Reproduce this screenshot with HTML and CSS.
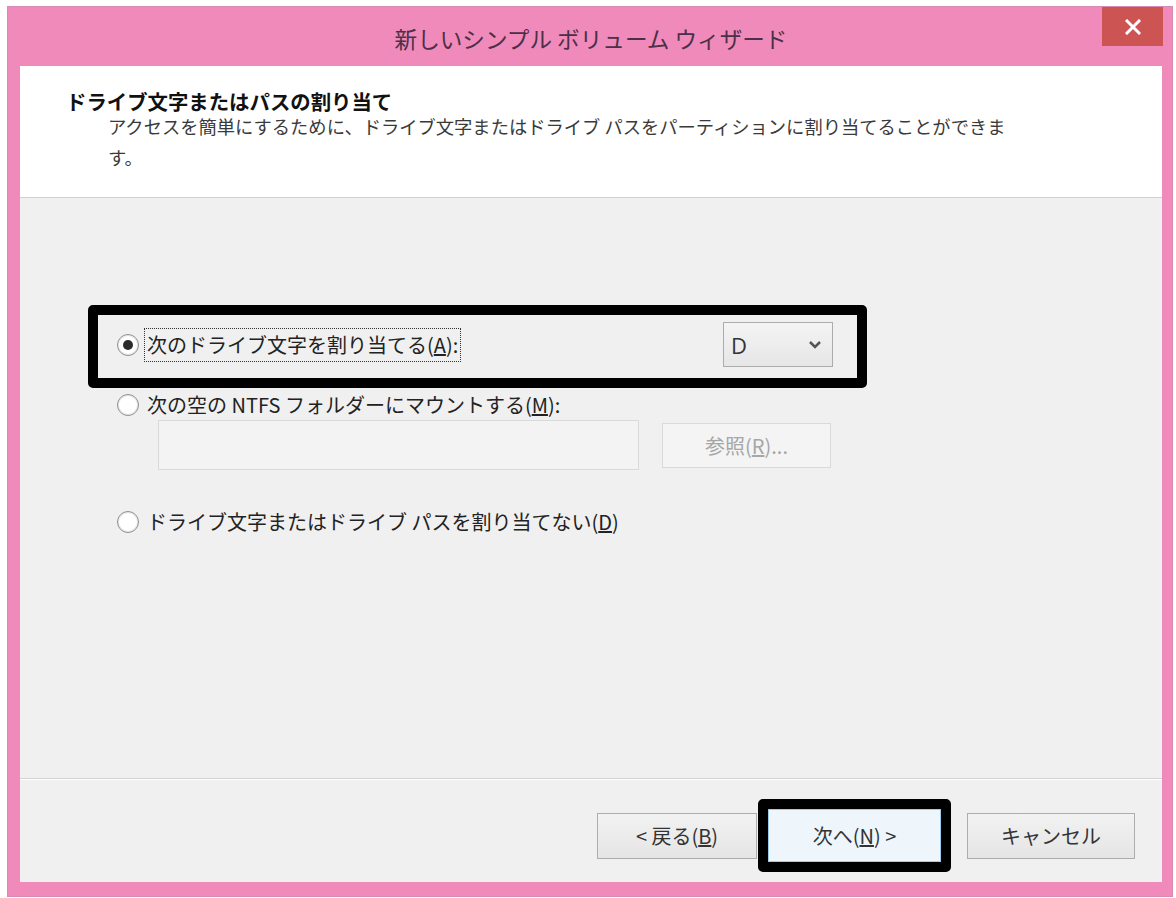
FILE: index.html
```html
<!DOCTYPE html>
<html lang="ja">
<head>
  <meta charset="UTF-8">
  <title>新しいシンプル ボリューム ウィザード</title>
  <link rel="stylesheet" href="styles.css">
</head>
<body>
  <div class="window">
    <div class="titlebar">
      <div></div>
      <div class="title">新しいシンプル ボリューム ウィザード</div>
      <div class="close">
        <svg width="16" height="16" viewBox="0 0 16 16">
          <path d="M2 2 L14 14 M14 2 L2 14" stroke="#fff" stroke-width="3" stroke-linecap="square"/>
        </svg>
      </div>
    </div>

    <div class="content">
      <div class="header">
        <div class="heading">ドライブ文字またはパスの割り当て</div>
        <div class="desc">アクセスを簡単にするために、ドライブ文字またはドライブ パスをパーティションに割り当てることができます。</div>
      </div>

      <div class="body">
        <div class="option first marked">
          <span class="radio checked"></span>
          <span class="label focus">次のドライブ文字を割り当てる(<u>A</u>):</span>
          <div class="combo">
            <span>D</span>
            <svg width="14" height="10" viewBox="0 0 14 10">
              <path d="M2 2 L7 7 L12 2" fill="none" stroke="#555" stroke-width="2.5"/>
            </svg>
          </div>
        </div>

        <div class="option second">
          <span class="radio"></span>
          <span class="label">次の空の NTFS フォルダーにマウントする(<u>M</u>):</span>
        </div>
        <div class="path-row">
          <div class="path-input"></div>
          <div class="btn disabled">参照(<u>R</u>)...</div>
        </div>

        <div class="option third">
          <span class="radio"></span>
          <span class="label">ドライブ文字またはドライブ パスを割り当てない(<u>D</u>)</span>
        </div>
      </div>

      <div class="footer">
        <div class="btn back">&lt; 戻る(<u>B</u>)</div>
        <div class="btn next marked">次へ(<u>N</u>) &gt;</div>
        <div class="btn cancel">キャンセル</div>
      </div>
    </div>
  </div>
</body>
</html>
```

FILE: styles.css
```css
body {
  margin: 0;
  background: #fff;
  font-family: "Noto Sans CJK JP", sans-serif;
  color: #222;
}
.window {
  margin: 6px 0 0 7px;
  width: 1166px;
  height: 891px;
  box-sizing: border-box;
  border: 1px solid #d98ab4;
  background: #ef8aba;
  padding: 0 10px 14px 12px;
  display: flex;
  flex-direction: column;
}
.titlebar {
  height: 59px;
  display: grid;
  grid-template-columns: 1fr auto 1fr;
}
.title {
  margin-top: 17px;
  font-size: 22.6px;
  line-height: 30px;
  color: #4b3047;
}
.close {
  justify-self: end;
  margin-right: -1px;
  width: 61px;
  height: 39px;
  background: #cc5452;
  display: flex;
  align-items: center;
  justify-content: center;
}
.content {
  flex: 1;
  background: #fff;
  display: flex;
  flex-direction: column;
}
.header {
  height: 132px;
  box-sizing: border-box;
  padding: 25px 0 0 46px;
  border-bottom: 1px solid #d0d0d0;
}
.heading {
  font-size: 20.4px;
  font-weight: bold;
  line-height: 20px;
  color: #111;
}
.desc {
  margin-left: 42px;
  width: 912px;
  font-size: 18.3px;
  line-height: 31px;
  color: #3a3a3a;
}
.body {
  flex: 1;
  background: #f0f0f0;
  padding: 124px 0 0 97px;
}
.option {
  display: flex;
  align-items: center;
  font-size: 20px;
  line-height: 26px;
}
.option.first {
  width: 716px;
  height: 45px;
  position: relative;
}
.option.second { margin-top: 25px; }
.option.third { margin-top: 39px; }
.radio {
  width: 20px;
  height: 20px;
  border: 1px solid #8f8f8f;
  border-radius: 50%;
  background: #fff;
  box-shadow: inset 0 0 0 1px #e6e6e6;
  display: flex;
  align-items: center;
  justify-content: center;
  margin-right: 8px;
}
.radio.checked::before {
  content: "";
  width: 10px;
  height: 10px;
  border-radius: 50%;
  background: #2b2b2b;
}
.label.focus {
  margin-left: -3px;
  padding: 3px 2px;
  border: 1px dotted #333;
}
.combo {
  margin-left: auto;
  width: 110px;
  height: 45px;
  box-sizing: border-box;
  border: 1px solid #acacac;
  background: linear-gradient(#f4f4f4, #e6e6e6);
  display: flex;
  align-items: center;
  justify-content: space-between;
  padding: 0 10px 0 7px;
  font-family: "Open Sans", sans-serif;
  font-size: 22px;
  color: #333;
}
.path-row {
  display: flex;
  align-items: center;
  margin: 2px 0 0 41px;
}
.path-input {
  width: 481px;
  height: 50px;
  box-sizing: border-box;
  border: 1px solid #d9d9d9;
  background: #f3f3f3;
}
.btn {
  height: 46px;
  box-sizing: border-box;
  border: 1px solid #adadad;
  background: linear-gradient(#f2f2f2, #e5e5e5);
  display: flex;
  align-items: center;
  justify-content: center;
  font-size: 20px;
  color: #333;
}
.btn.disabled {
  margin-left: 23px;
  width: 169px;
  height: 45px;
  border-color: #d9d9d9;
  background: #f4f4f4;
  color: #a6a6a6;
}
.footer {
  height: 104px;
  box-sizing: border-box;
  border-top: 1px solid #d3d3d3;
  box-shadow: inset 0 1px #fff;
  background: #f0f0f0;
  padding: 29px 27px 0 0;
  display: flex;
  justify-content: flex-end;
  align-items: center;
  align-content: flex-start;
  flex-wrap: wrap;
}
.btn.back {
  width: 160px;
  margin-right: 10px;
}
.btn.next {
  width: 175px;
  height: 55px;
  margin-right: 25px;
  border: 2px solid #9acbef;
  background: #eef5fb;
  position: relative;
}
.btn.cancel {
  width: 168px;
}
.marked::after {
  content: "";
  position: absolute;
  border: 10px solid #000;
  border-radius: 5px;
}
.option.first::after {
  top: -17px;
  left: -29px;
  right: -34px;
  bottom: -21px;
}
.btn.next::after {
  top: -11px;
  left: -11px;
  right: -11px;
  bottom: -11px;
}
```
